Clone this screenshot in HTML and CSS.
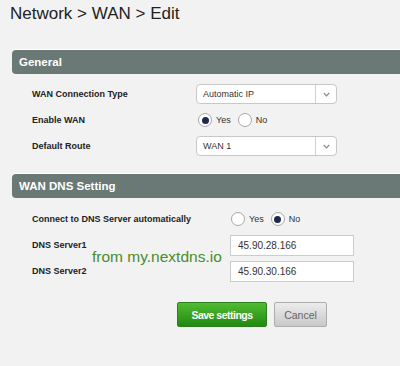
FILE: index.html
```html
<!DOCTYPE html>
<html lang="en">
<head>
    <meta charset="UTF-8">
    <meta name="viewport" content="width=device-width, initial-scale=1.0">
    <title>Network &gt; WAN &gt; Edit</title>
    <link rel="stylesheet" href="styles.css">
</head>
<body>
    <h1 class="page-title">Network &gt; WAN &gt; Edit</h1>

    <!-- General -->
    <div class="panel">
        <div class="panel-head">General</div>
        <div class="panel-body general">
            <div class="row">
                <div class="label">WAN Connection Type</div>
                <div class="select">
                    <span class="select-value">Automatic IP</span>
                    <span class="select-arrow">
                        <svg width="7" height="5" viewBox="0 0 7 5"><path d="M0.8 1 L3.5 3.8 L6.2 1" fill="none" stroke="#8a8a8a" stroke-width="1.2"/></svg>
                    </span>
                </div>
            </div>
            <div class="row">
                <div class="label">Enable WAN</div>
                <div class="radios">
                    <span class="radio checked"></span><span class="radio-text">Yes</span>
                    <span class="radio"></span><span class="radio-text">No</span>
                </div>
            </div>
            <div class="row">
                <div class="label">Default Route</div>
                <div class="select">
                    <span class="select-value">WAN 1</span>
                    <span class="select-arrow">
                        <svg width="7" height="5" viewBox="0 0 7 5"><path d="M0.8 1 L3.5 3.8 L6.2 1" fill="none" stroke="#8a8a8a" stroke-width="1.2"/></svg>
                    </span>
                </div>
            </div>
        </div>
    </div>

    <!-- WAN DNS Setting -->
    <div class="panel">
        <div class="panel-head">WAN DNS Setting</div>
        <div class="panel-body dns">
            <div class="row">
                <div class="label">Connect to DNS Server automatically</div>
                <div class="radios">
                    <span class="radio"></span><span class="radio-text">Yes</span>
                    <span class="radio checked"></span><span class="radio-text">No</span>
                </div>
            </div>
            <div class="row">
                <div class="label">DNS Server1</div>
                <input type="text" class="text-input" value="45.90.28.166">
            </div>
            <div class="row">
                <div class="label">DNS Server2</div>
                <input type="text" class="text-input" value="45.90.30.166">
            </div>
        </div>
    </div>

    <div class="actions">
        <button class="btn btn-save">Save settings</button>
        <button class="btn btn-cancel">Cancel</button>
    </div>

    <!-- annotation -->
    <div class="note">from my.nextdns.io</div>
</body>
</html>
```

FILE: styles.css
```css
body {
    font-family: "Liberation Sans", Arial, sans-serif;
    background-color: #f2f2f2;
    color: #222;
    margin: 0;
    overflow: hidden;
}

.page-title {
    margin: 0;
    padding: 4px 0 0 10px;
    font-size: 17px;
    font-weight: normal;
    line-height: 20px;
    color: #222;
}

/* Section panels */
.panel {
    margin-left: 12px;
}

.panel:first-of-type {
    margin-top: 26px;
}

.panel-head {
    background: #6b7976;
    color: white;
    height: 24px;
    line-height: 24px;
    padding-left: 7px;
    font-size: 11.5px;
    font-weight: bold;
    border-radius: 4px 0 0 4px;
    box-shadow: 0 -1px 0 #fff;
}

.panel-body {
    padding: 7px 0 15px 20px;
}

.panel-body.dns {
    padding-top: 8px;
    padding-bottom: 0;
}

.row {
    display: grid;
    grid-template-columns: 164px auto;
    align-items: center;
    height: 26px;
}

.dns .row {
    grid-template-columns: 198px auto;
}

.label {
    font-size: 9px;
    font-weight: bold;
    color: #222;
}

/* Select boxes */
.select {
    display: flex;
    width: 139px;
    height: 18px;
    background: white;
    border: 1px solid #c8c8c8;
    border-radius: 4px;
    font-size: 9px;
    color: #333;
}

.select-value {
    flex: 1;
    line-height: 18px;
    padding-left: 6px;
}

.select-arrow {
    width: 20px;
    border-left: 1px solid #d0d0d0;
    display: flex;
    align-items: center;
    justify-content: center;
}

/* Radio buttons */
.radios {
    display: flex;
    align-items: center;
    padding-left: 2px;
}

.dns .radios {
    padding-left: 1px;
}

.radio {
    width: 12px;
    height: 12px;
    border: 1px solid #a8a8a8;
    border-radius: 50%;
    background: white;
    display: flex;
    align-items: center;
    justify-content: center;
}

.radio.checked::after {
    content: "";
    width: 7px;
    height: 7px;
    border-radius: 50%;
    background: #1e2a4c;
}

.radio-text {
    font-size: 9px;
    color: #333;
    margin: 0 7px 0 4px;
}

/* Text inputs */
.text-input {
    width: 124px;
    height: 21px;
    box-sizing: border-box;
    border: 1px solid #ccc;
    background: white;
    padding: 0 7px;
    font-family: "Liberation Sans", Arial, sans-serif;
    font-size: 10px;
    color: #333;
    outline: none;
}

/* Buttons */
.actions {
    display: flex;
    gap: 7px;
    margin-top: 18px;
    padding-left: 177px;
}

.btn {
    height: 25px;
    border-radius: 2px;
    font-family: "Liberation Sans", Arial, sans-serif;
    font-size: 10.5px;
    padding: 0;
    cursor: pointer;
}

.btn-save {
    width: 90px;
    background: linear-gradient(#52bb33, #1f8a10);
    border: 1px solid #2c7f1c;
    color: white;
    font-weight: bold;
    letter-spacing: -0.5px;
}

.btn-cancel {
    width: 53px;
    background: linear-gradient(#ececec, #c9c9c9);
    border: 1px solid #adadad;
    color: #666;
}

/* Annotation over the form */
.note {
    position: absolute;
    left: 92px;
    top: 249px;
    font-size: 15.5px;
    line-height: 16px;
    color: #4a8c2c;
}
```
